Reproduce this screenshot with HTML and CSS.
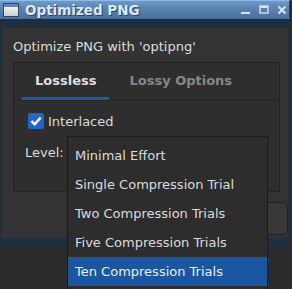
FILE: index.html
```html
<!DOCTYPE html>
<html>
<head>
<meta charset="utf-8">
<link rel="stylesheet" href="styles.css">
</head>
<body>
<div class="window">
  <div class="titlebar">
    <span class="app-icon"><span class="app-icon-bar"></span></span>
    <span class="title">Optimized PNG</span>
    <span class="controls">
      <svg width="10" height="10" viewBox="0 0 10 10"><rect x="0" y="7" width="9" height="2" fill="#d6e2ef"/></svg>
      <svg width="10" height="10" viewBox="0 0 10 10"><rect x="1" y="1" width="8" height="7" fill="none" stroke="#d6e2ef" stroke-width="1.4"/><rect x="1" y="1" width="8" height="2" fill="#d6e2ef"/></svg>
      <svg width="10" height="10" viewBox="0 0 10 10"><path d="M1.5 1.5 L8.5 8.5 M8.5 1.5 L1.5 8.5" stroke="#d6e2ef" stroke-width="2.2"/></svg>
    </span>
  </div>
  <div class="frame">
    <div class="content">
      <div class="intro">Optimize PNG with 'optipng'</div>
      <div class="tabwidget">
        <div class="tabbar">
          <span class="tab active">Lossless</span>
          <span class="tab">Lossy Options</span>
        </div>
        <div class="pane">
          <div class="check">
            <span class="box"><svg width="16" height="16" viewBox="0 0 16 16"><path d="M3.5 8.2 L6.6 11.2 L12.6 4.6" fill="none" stroke="#fff" stroke-width="2.4"/></svg></span>
            <span>Interlaced</span>
          </div>
          <div class="level-row">
            <span class="level-label">Level:</span>
            <span class="combo"></span>
          </div>
        </div>
      </div>
      <div class="buttons"><span class="btn"></span></div>
    </div>
  </div>
</div>
<div class="popup">
  <div class="item">Minimal Effort</div>
  <div class="item">Single Compression Trial</div>
  <div class="item">Two Compression Trials</div>
  <div class="item">Five Compression Trials</div>
  <div class="item selected">Ten Compression Trials</div>
</div>
</body>
</html>
```
FILE: styles.css
```css
html, body {
  margin: 0;
  padding: 0;
}
body {
  width: 292px;
  height: 289px;
  overflow: hidden;
  background: #2b2b2b;
  font-family: "DejaVu Sans", sans-serif;
  font-size: 13px;
  color: #dcdcdc;
  position: relative;
}
.window {
  width: 290px;
  background: #1f2f3f;
}
.titlebar {
  height: 19px;
  display: flex;
  align-items: center;
  background: linear-gradient(#6f9bc8, #5b84b2 40%, #4a6f9c);
  border-top: 1px solid #8cbbe8;
  box-sizing: border-box;
  padding-left: 3px;
  border-right: 1px solid #2a3e55;
}
.app-icon {
  width: 16px;
  height: 14px;
  box-sizing: border-box;
  border: 1px solid #2d4868;
  background: linear-gradient(#ffffff, #c9ccd2);
  display: flex;
  flex-direction: column;
}
.app-icon-bar {
  height: 3px;
  background: #5f86b8;
}
.title {
  margin-left: 6px;
  font-weight: bold;
  font-size: 13.5px;
  color: #dbe8f6;
  text-shadow: 1px 1px 0 #2b4464;
  flex: 1;
}
.controls {
  display: flex;
  gap: 8px;
  padding-right: 2px;
  align-items: center;
}
.frame {
  padding: 9px 2px 10px 2px;
}
.content {
  background: #333333;
  height: 210px;
  padding: 0 0 0 11px;
  box-sizing: border-box;
  display: flex;
  flex-direction: column;
}
.intro {
  height: 34px;
  line-height: 38px;
}
.tabwidget {
  width: 267px;
  height: 130px;
  box-sizing: border-box;
  border: 1px solid #222222;
  background: #2e2e2e;
  display: flex;
  flex-direction: column;
}
.tabbar {
  height: 37px;
  display: flex;
  gap: 7px;
  padding-left: 8px;
  border-bottom: 1px solid #262626;
}
.tab {
  padding: 0 13px;
  font-weight: bold;
  color: #888888;
  line-height: 35px;
}
.tab.active {
  color: #dedede;
  border-bottom: 3px solid #1e5aa8;
}
.pane {
  padding: 12px 0 0 14px;
}
.check {
  display: flex;
  align-items: center;
  gap: 4px;
  height: 16px;
}
.box {
  width: 16px;
  height: 16px;
  border-radius: 2px;
  background: #2366c6;
  display: block;
}
.box svg { display: block; }
.level-row {
  display: flex;
  align-items: center;
  margin-top: 8px;
  height: 30px;
  margin-left: -3px;
}
.level-label {
  width: 42px;
}
.combo {
  width: 200px;
  height: 30px;
}
.buttons {
  display: flex;
  justify-content: flex-end;
  margin-top: 10px;
}
.btn {
  width: 80px;
  height: 33px;
  box-sizing: border-box;
  border: 1px solid #1f1f1f;
  border-radius: 5px;
  background: #383838;
}
.popup {
  position: absolute;
  left: 67px;
  top: 136px;
  width: 201px;
  box-sizing: border-box;
  border: 1px solid #1a1a1a;
  background: #2d2d2d;
  padding: 4px 0 3px 0;
}
.item {
  height: 29px;
  line-height: 29px;
  padding-left: 7px;
  color: #dcdcdc;
}
.item.selected {
  background: #1a56a2;
  color: #e8eef6;
}
```
